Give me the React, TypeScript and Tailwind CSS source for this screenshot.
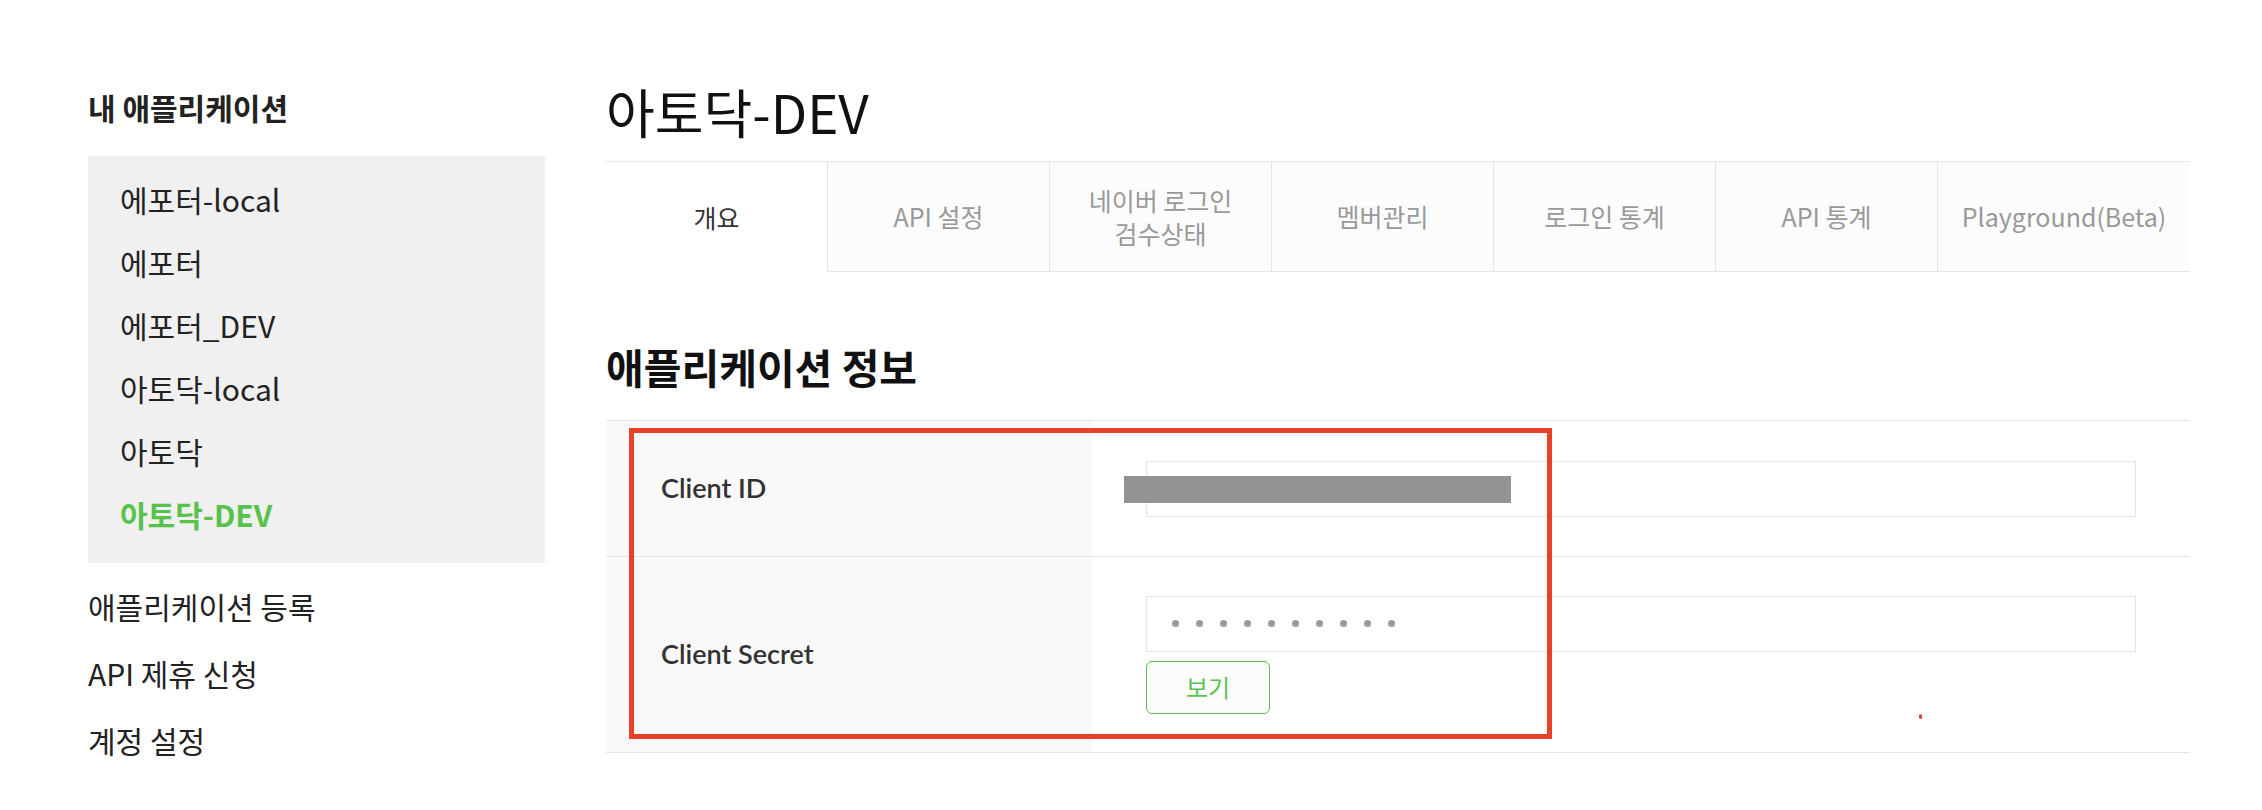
const myApps = ["에포터-local", "에포터", "에포터_DEV", "아토닥-local", "아토닥"];

const tabs = [
    { label: "API 설정" },
    { label: "네이버 로그인", sub: "검수상태" },
    { label: "멤버관리" },
    { label: "로그인 통계" },
    { label: "API 통계" },
];

export default function App() {
    return (
        <div className="flex min-h-screen bg-white pl-[88px] font-['Noto_Sans_CJK_KR',sans-serif] text-[#222]">

            {/* SIDEBAR */}
            <aside className="w-[457px] shrink-0 pt-[87px]">
                <h2 className="h-[40px] text-[30px] font-bold leading-[40px]">내 애플리케이션</h2>

                <ul className="mt-[29px] bg-[#f0f0f0] pt-[12px] pb-[17px] pl-[32px] text-[30px]">
                    {myApps.map((name) => (
                        <li key={name} className="flex h-[63px] items-center">{name}</li>
                    ))}
                    <li className="flex h-[63px] items-center font-bold text-[#58c34c]">아토닥-DEV</li>
                </ul>

                <ul className="mt-[10px] text-[30px]">
                    <li className="flex h-[67px] items-center">애플리케이션 등록</li>
                    <li className="flex h-[67px] items-center">API 제휴 신청</li>
                    <li className="flex h-[67px] items-center">계정 설정</li>
                </ul>
            </aside>

            {/* MAIN */}
            <main className="ml-[61px] w-[1584px] shrink-0 pt-[81px]">
                <h1 className="h-[60px] text-[53px] leading-[60px] text-[#111]">아토닥-DEV</h1>

                {/* TABS */}
                <div className="mt-[20px] flex h-[111px] border-t border-[#e5e5e5] text-[25px] leading-[33px]">
                    <div className="flex w-[221px] items-center justify-center bg-white text-[#333]">개요</div>
                    {tabs.map((t) => (
                        <div
                            key={t.label}
                            className="flex w-[222px] flex-col items-center justify-center border-b border-l border-[#e5e5e5] bg-[#fcfcfc] text-[#999]"
                        >
                            <span>{t.label}</span>
                            {t.sub && <span>{t.sub}</span>}
                        </div>
                    ))}
                    <div className="flex flex-1 items-center justify-center border-b border-l border-[#e5e5e5] bg-[#fcfcfc] text-[#999]">
                        Playground(Beta)
                    </div>
                </div>

                {/* APP INFO */}
                <h2 className="mt-[64px] h-[60px] text-[41px] font-semibold leading-[60px] text-[#111]">애플리케이션 정보</h2>

                <div className="relative mt-[24px] border-t border-[#e5e5e5]">
                    <div className="flex h-[136px] border-b border-[#e5e5e5]">
                        <div className="flex w-[486px] items-center bg-[#f9f9f9] pl-[55px] font-['Lato','Noto_Sans_CJK_KR',sans-serif] text-[27px] font-semibold text-[#333]">
                            Client ID
                        </div>
                        <div className="flex flex-1 items-center px-[54px]">
                            <div className="relative h-[56px] w-full border border-[#e5e5e5] bg-white">
                                <div className="absolute top-[14px] left-[-23px] h-[27px] w-[387px] bg-[#939393]" />
                            </div>
                        </div>
                    </div>

                    <div className="flex h-[196px] border-b border-[#e5e5e5]">
                        <div className="flex w-[486px] items-center bg-[#f9f9f9] pl-[55px] font-['Lato','Noto_Sans_CJK_KR',sans-serif] text-[27px] font-semibold text-[#333]">
                            Client Secret
                        </div>
                        <div className="flex flex-1 flex-col justify-center px-[54px]">
                            <div className="flex h-[56px] w-full items-center gap-[17px] border border-[#e5e5e5] bg-white pl-[25px]">
                                {Array.from({ length: 10 }).map((_, i) => (
                                    <span key={i} className="h-[7px] w-[7px] rounded-full bg-[#9a9a9a]" />
                                ))}
                            </div>
                            <button className="mt-[9px] h-[53px] w-[124px] rounded-[6px] border border-[#5bc24f] bg-[#fcfcfc] text-[24px] text-[#5bc24f]">
                                보기
                            </button>
                        </div>
                    </div>

                    {/* annotation */}
                    <div className="pointer-events-none absolute top-[7px] left-[23px] h-[311px] w-[923px] border-[5px] border-[#e8412a]" />
                    <div className="absolute top-[293px] left-[1313px] h-[5px] w-[3px] rounded-full bg-[#e8412a]" />
                </div>
            </main>
        </div>
    );
}
